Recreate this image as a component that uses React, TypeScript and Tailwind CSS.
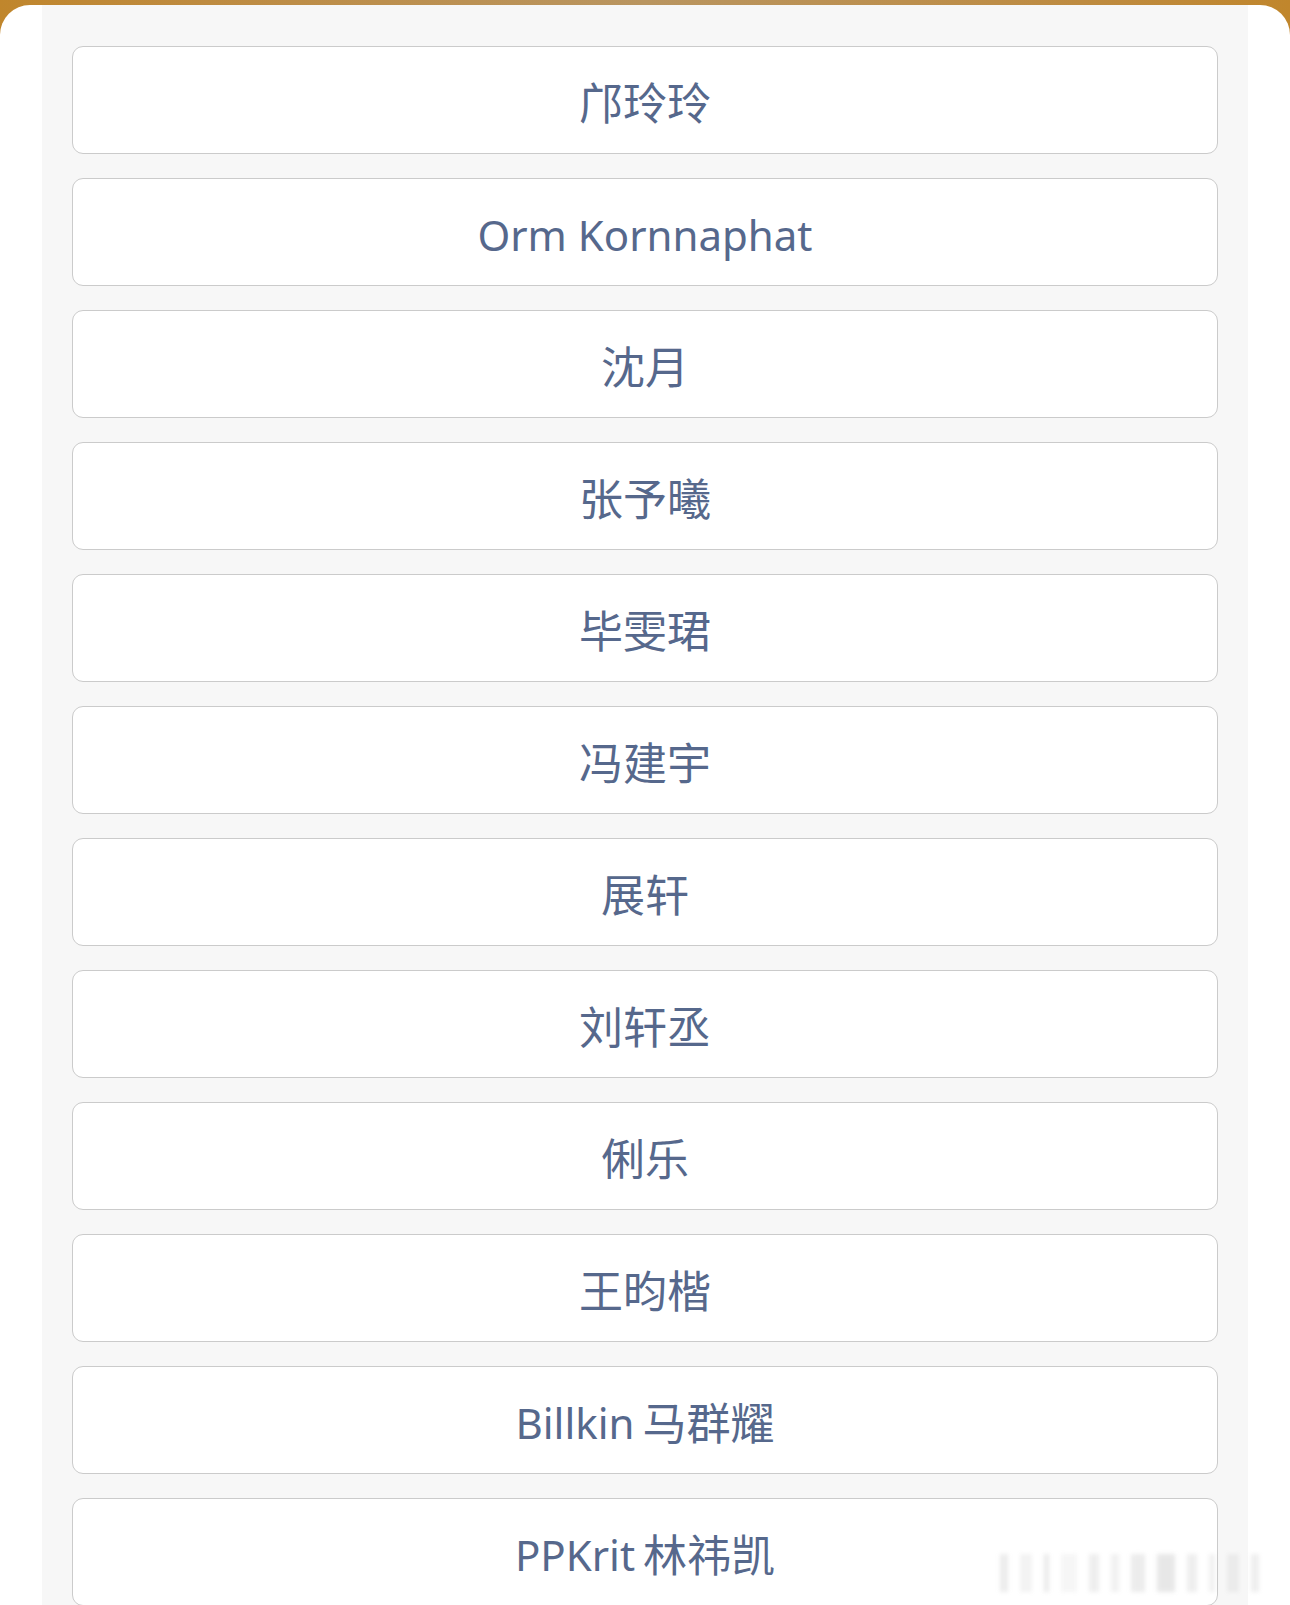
import React from "react";

type Seg = { t: string; cjk: boolean };

const names: Seg[][] = [
  [{ t: "邝玲玲", cjk: true }],
  [{ t: "Orm Kornnaphat", cjk: false }],
  [{ t: "沈月", cjk: true }],
  [{ t: "张予曦", cjk: true }],
  [{ t: "毕雯珺", cjk: true }],
  [{ t: "冯建宇", cjk: true }],
  [{ t: "展轩", cjk: true }],
  [{ t: "刘轩丞", cjk: true }],
  [{ t: "俐乐", cjk: true }],
  [{ t: "王昀楷", cjk: true }],
  [
    { t: "Billkin", cjk: false },
    { t: "马群耀", cjk: true },
  ],
  [
    { t: "PPKrit", cjk: false },
    { t: "林祎凯", cjk: true },
  ],
];

const bars = [
  { w: 8, o: 0.16 },
  { w: 12, o: 0.1 },
  { w: 5, o: 0.18 },
  { w: 16, o: 0.08 },
  { w: 10, o: 0.14 },
  { w: 8, o: 0.12 },
  { w: 14, o: 0.16 },
  { w: 18, o: 0.2 },
  { w: 10, o: 0.14 },
  { w: 6, o: 0.12 },
  { w: 12, o: 0.1 },
  { w: 8, o: 0.14 },
];

export default function App() {
  return (
    <div className="relative h-[1605px] w-[1290px] overflow-hidden bg-gradient-to-r from-[#c0862c] via-[#b99560] to-[#c0862c]">
      <div className="mt-[5px] h-[1600px] rounded-t-[30px] bg-white">
        <div className="mx-[42px] flex h-full flex-col gap-[24px] bg-[#f7f7f7] px-[30px] pt-[41px]">
          {names.map((segs, i) => (
            <div
              key={i}
              className="flex h-[108px] shrink-0 items-center justify-center rounded-[11px] border border-[#cbcbcb] bg-white pt-[6px]"
            >
              {segs.map((s, j) => (
                <span
                  key={j}
                  className={
                    s.cjk
                      ? "text-[44px] leading-none text-[#56688c]"
                      : "text-[42px] leading-none text-[#56688c] mr-[8px] last:mr-0"
                  }
                  style={{ fontFamily: '"Noto Sans", "Noto Sans CJK SC", sans-serif' }}
                >
                  {s.t}
                </span>
              ))}
            </div>
          ))}
        </div>
      </div>
      <div className="absolute left-[1000px] top-[1554px] flex h-[38px] items-stretch gap-[12px] blur-[2px]">
        {bars.map((b, i) => (
          <div key={i} className="bg-[#888]" style={{ width: b.w, opacity: b.o }} />
        ))}
      </div>
    </div>
  );
}
